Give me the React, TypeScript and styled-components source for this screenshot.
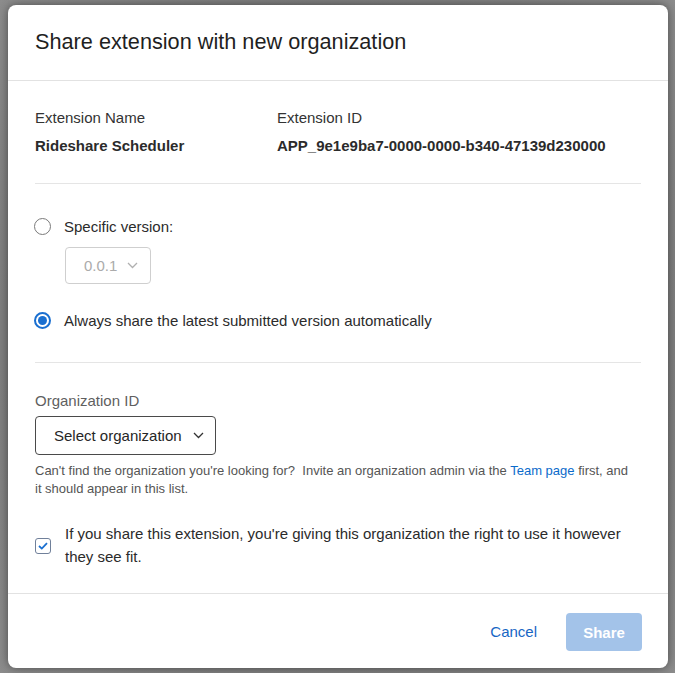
import React from "react";
import styled, { createGlobalStyle } from "styled-components";

const Global = createGlobalStyle`
  html, body { margin: 0; padding: 0; }
  body {
    background: #7d7d7d;
    font-family: "Liberation Sans", Arial, sans-serif;
    color: #262626;
  }
`;

const Backdrop = styled.div`
  width: 675px;
  height: 673px;
  box-sizing: border-box;
  padding: 5px 7px 5px 8px;
  display: flex;
  background: radial-gradient(ellipse at center, #6f6f6f 0%, #7f7f7f 70%, #8c8c8c 100%);
`;

const Modal = styled.div`
  width: 660px;
  height: 663px;
  background: #fff;
  border-radius: 8px;
  box-shadow: 0 0 10px rgba(0, 0, 0, 0.45);
  display: flex;
  flex-direction: column;
  overflow: hidden;
`;

const Header = styled.div`
  height: 76px;
  box-sizing: border-box;
  padding: 0 27px;
  display: flex;
  align-items: center;
  border-bottom: 1px solid #e2e2e2;
`;

const Title = styled.h1`
  margin: 0;
  font-size: 21.7px;
  font-weight: 400;
  color: #1f1f1f;
  position: relative;
  top: -1px;
`;

const Body = styled.div`
  flex: 1;
  padding: 27px 27px 0;
  display: flex;
  flex-direction: column;
`;

const InfoGrid = styled.div`
  display: grid;
  grid-template-columns: 242px 1fr;
  row-gap: 8px;
  padding-bottom: 27px;
  border-bottom: 1px solid #e5e5e5;
`;

const InfoLabel = styled.div`
  font-size: 15px;
  line-height: 20px;
  color: #333;
`;

const InfoValue = styled.div`
  font-size: 15px;
  line-height: 20px;
  font-weight: 700;
  color: #2b2b2b;
`;

const VersionSection = styled.div`
  padding: 30px 0 30px;
  border-bottom: 1px solid #e5e5e5;
  display: flex;
  flex-direction: column;
`;

const RadioRow = styled.label<{ $mt?: number }>`
  display: flex;
  align-items: center;
  gap: 13px;
  height: 24px;
  font-size: 15px;
  color: #2b2b2b;
  margin-top: ${(p) => p.$mt ?? 0}px;
`;

const RadioCircle = styled.span<{ $checked?: boolean }>`
  width: 17px;
  height: 17px;
  box-sizing: border-box;
  border-radius: 50%;
  margin-left: -1px;
  border: ${(p) => (p.$checked ? "2px solid #1a6fd0" : "1px solid #7a7a7a")};
  display: flex;
  align-items: center;
  justify-content: center;
  &::after {
    content: "";
    display: ${(p) => (p.$checked ? "block" : "none")};
    width: 9px;
    height: 9px;
    border-radius: 50%;
    background: #1a6fd0;
  }
`;

const Select = styled.div<{ $disabled?: boolean }>`
  display: inline-flex;
  align-items: center;
  box-sizing: border-box;
  border-radius: 4px;
  font-size: 15px;
  border: 1px solid ${(p) => (p.$disabled ? "#cfcfcf" : "#4a4a4a")};
  color: ${(p) => (p.$disabled ? "#ababab" : "#262626")};
  align-self: flex-start;
`;

const VersionSelect = styled(Select)`
  width: 86px;
  height: 37px;
  margin: 9px 0 0 30px;
  padding-left: 18px;
  gap: 10px;
`;

const OrgSelect = styled(Select)`
  width: 181px;
  height: 39px;
  margin-top: 5px;
  padding-left: 18px;
  gap: 11px;
`;

const Chevron = ({ color }: { color: string }) => (
  <svg width="11" height="7" viewBox="0 0 11 7">
    <polyline points="1,1 5.5,5.5 10,1" fill="none" stroke={color} strokeWidth="1.3" />
  </svg>
);

const OrgSection = styled.div`
  padding-top: 28px;
  display: flex;
  flex-direction: column;
`;

const FieldLabel = styled.div`
  font-size: 15px;
  line-height: 20px;
  color: #5f5f5f;
`;

const Help = styled.p`
  margin: 7px 0 0;
  max-width: 600px;
  font-size: 13px;
  line-height: 18px;
  color: #555;
`;

const Link = styled.a`
  color: #0b6bcb;
  text-decoration: none;
`;

const ConsentRow = styled.label`
  display: flex;
  align-items: center;
  gap: 14px;
  margin-top: 24px;
  font-size: 15px;
  line-height: 23px;
  color: #2b2b2b;
`;

const CheckBox = styled.span`
  flex: none;
  width: 16px;
  height: 16px;
  box-sizing: border-box;
  border: 1px solid #70809a;
  border-radius: 3px;
  display: flex;
  align-items: center;
  justify-content: center;
  position: relative;
  top: 1px;
`;

const Footer = styled.div`
  height: 75px;
  box-sizing: border-box;
  border-top: 1px solid #e2e2e2;
  padding: 0 26px 0 0;
  display: flex;
  align-items: center;
  justify-content: flex-end;
  gap: 13px;
`;

const TextButton = styled.button`
  border: none;
  background: transparent;
  font-family: inherit;
  font-size: 15px;
  color: #1766c4;
  padding: 0 16px;
  height: 38px;
`;

const PrimaryButton = styled.button`
  border: none;
  border-radius: 4px;
  background: #a3c3e9;
  color: #fff;
  font-family: inherit;
  font-size: 15px;
  font-weight: 700;
  width: 76px;
  height: 38px;
  position: relative;
  top: 1px;
`;

export default function App() {
  return (
    <>
      <Global />
      <Backdrop>
        <Modal>
          <Header>
            <Title>Share extension with new organization</Title>
          </Header>
          <Body>
            <InfoGrid>
              <InfoLabel>Extension Name</InfoLabel>
              <InfoLabel>Extension ID</InfoLabel>
              <InfoValue>Rideshare Scheduler</InfoValue>
              <InfoValue>APP_9e1e9ba7-0000-0000-b340-47139d230000</InfoValue>
            </InfoGrid>
            <VersionSection>
              <RadioRow>
                <RadioCircle />
                Specific version:
              </RadioRow>
              <VersionSelect $disabled>
                0.0.1
                <Chevron color="#b0b0b0" />
              </VersionSelect>
              <RadioRow $mt={24}>
                <RadioCircle $checked />
                Always share the latest submitted version automatically
              </RadioRow>
            </VersionSection>
            <OrgSection>
              <FieldLabel>Organization ID</FieldLabel>
              <OrgSelect>
                Select organization
                <Chevron color="#333" />
              </OrgSelect>
              <Help>
                Can't find the organization you're looking for?&nbsp; Invite an organization admin via the{" "}
                <Link href="#">Team page</Link> first, and it should appear in this list.
              </Help>
              <ConsentRow>
                <CheckBox>
                  <svg width="10" height="8" viewBox="0 0 10 8">
                    <polyline points="1,4 3.8,6.6 9,1.2" fill="none" stroke="#1a6fd0" strokeWidth="1.8" />
                  </svg>
                </CheckBox>
                If you share this extension, you're giving this organization the right to use it however they
                see fit.
              </ConsentRow>
            </OrgSection>
          </Body>
          <Footer>
            <TextButton>Cancel</TextButton>
            <PrimaryButton>Share</PrimaryButton>
          </Footer>
        </Modal>
      </Backdrop>
    </>
  );
}
